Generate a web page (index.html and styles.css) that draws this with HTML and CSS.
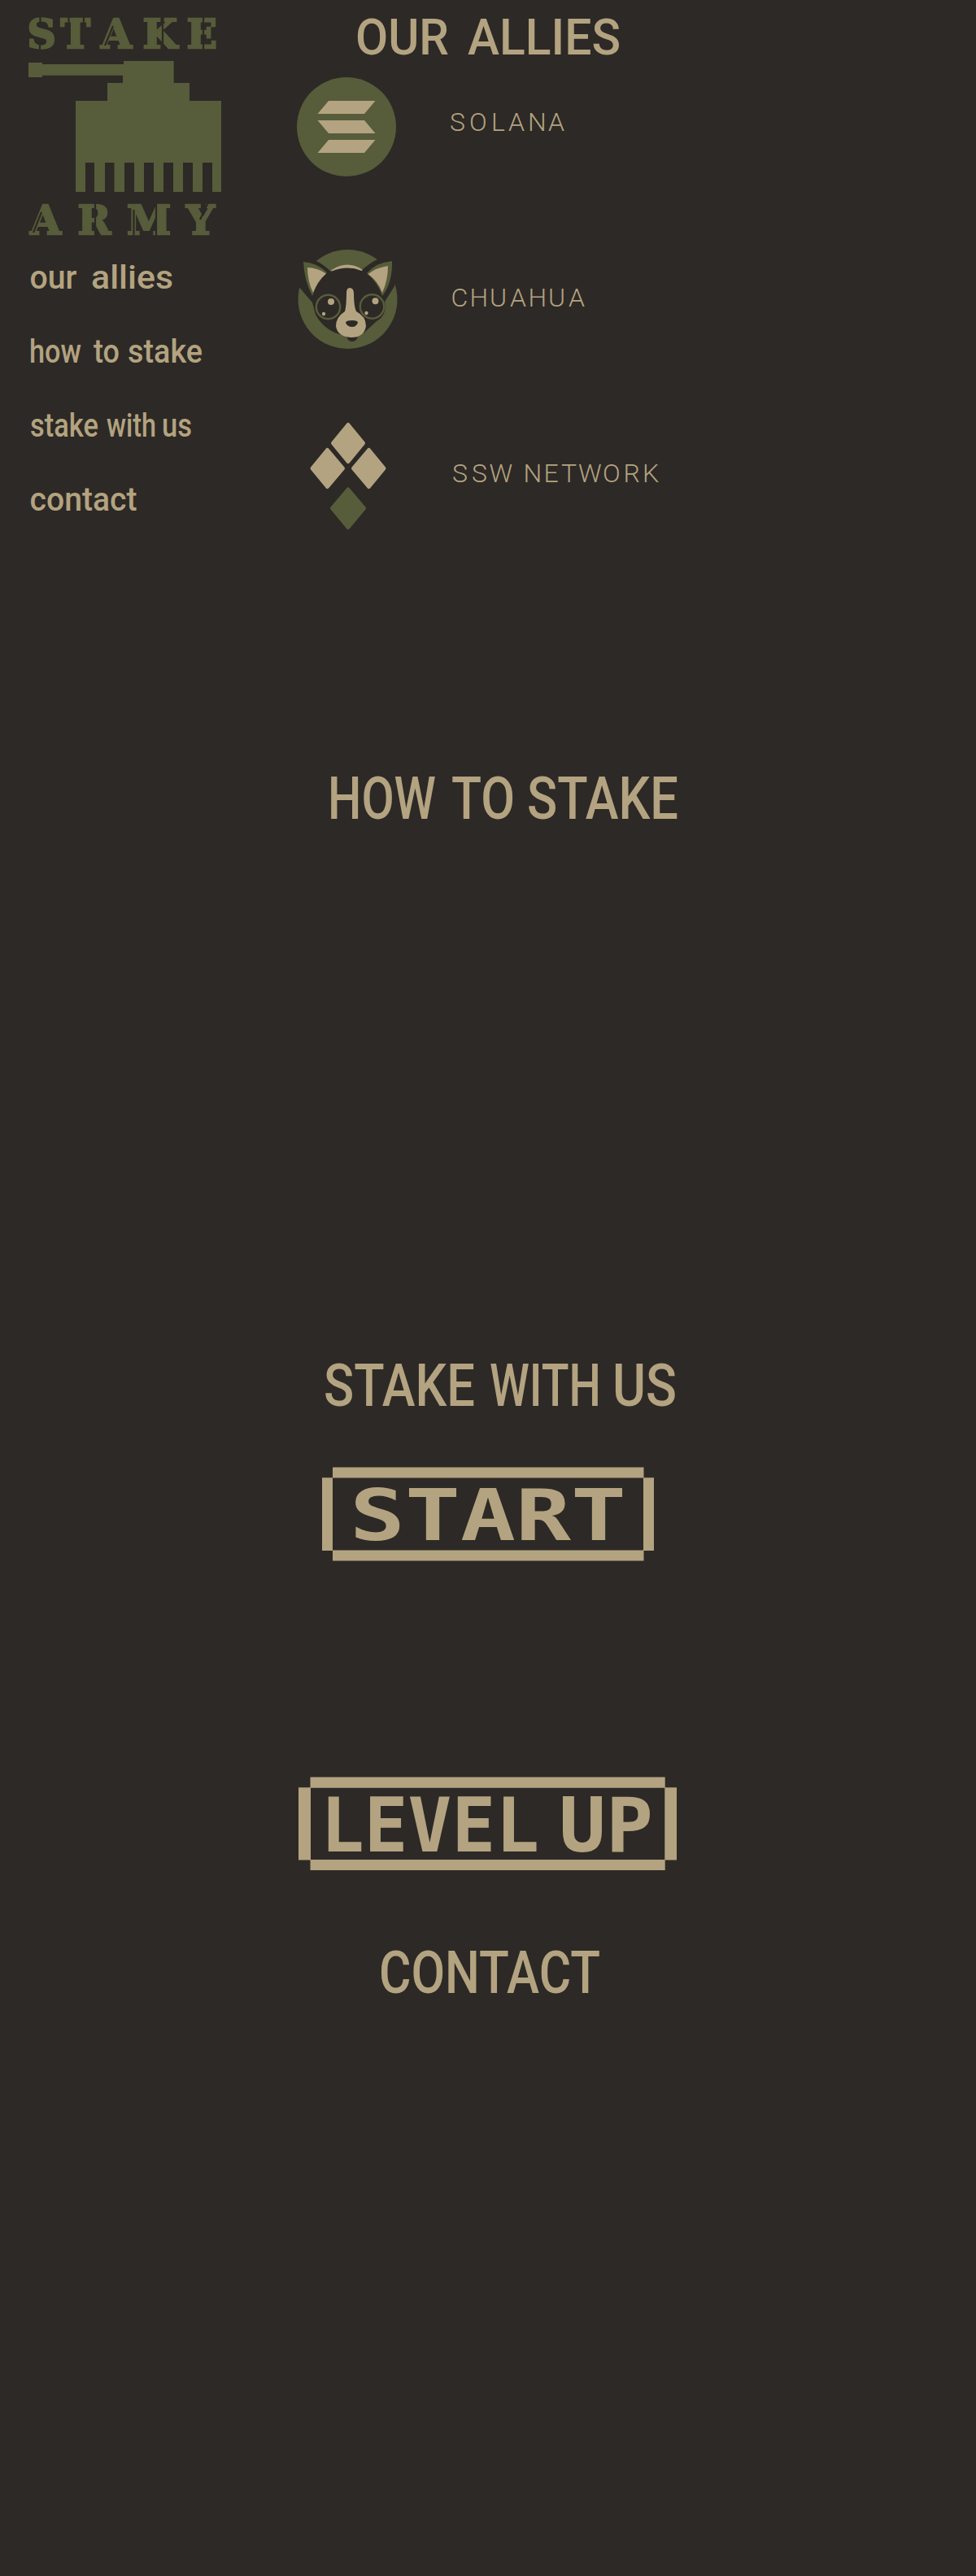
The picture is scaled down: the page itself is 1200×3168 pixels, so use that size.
FILE: index.html
```
<!DOCTYPE html>
<html lang="en">
<head>
<meta charset="utf-8">
<title>Stake Army</title>
<link rel="stylesheet" href="styles.css">
</head>
<body>
<div class="page">
  <aside class="sidebar">
    <svg class="logo" viewBox="0 0 300 300" role="img" aria-label="Stake Army">
      <text class="stencil" y="58.500" x="33.5 74.500 124 175.500 229.500">STAKE</text>
      <path class="olive" d="M35 77H52V79H152V75H213.7V102H233V124H272V236H261V200H249V236H237V200H225V236H213V200H201V236H189V200H177V236H165V200H153V236H140.5V200H129V236H116V200H105V236H93V124H132V102H151V92.7H52V95H35Z"/>
      <text class="stencil" y="287.500" x="37 95.500 156 229">ARMY</text>
      <path class="cut" d="M49.500 20V31M49 50V61M84.500 20V50M103 20V50M139 32L129 56M200 20V61M250 20V61M117 249V290M164.500 258V290M192 249V290M256 249L246 270M51 261L41 286"/>
    </svg>
    <nav class="menu">
      <a href="#allies"><svg viewBox="0 0 300 91"><text class="link" y="55" x="36.500" textLength="58" lengthAdjust="spacingAndGlyphs">our</text> <text class="link" y="55" x="112" textLength="101" lengthAdjust="spacingAndGlyphs">allies</text></svg></a>
      <a href="#how"><svg viewBox="0 0 300 91"><text class="link" y="55" x="36" textLength="64" lengthAdjust="spacingAndGlyphs">how</text> <text class="link" y="55" x="115" textLength="32" lengthAdjust="spacingAndGlyphs">to</text> <text class="link" y="55" x="157" textLength="92" lengthAdjust="spacingAndGlyphs">stake</text></svg></a>
      <a href="#stake"><svg viewBox="0 0 300 91"><text class="link" y="55" x="37" textLength="84" lengthAdjust="spacingAndGlyphs">stake</text> <text class="link" y="55" x="131" textLength="61" lengthAdjust="spacingAndGlyphs">with</text> <text class="link" y="55" x="199" textLength="37" lengthAdjust="spacingAndGlyphs">us</text></svg></a>
      <a href="#contact"><svg viewBox="0 0 300 91"><text class="link" y="55" x="36.500" textLength="132" lengthAdjust="spacingAndGlyphs">contact</text></svg></a>
    </nav>
  </aside>
  <main class="content">
    <section class="panel" id="allies">
      <h2 class="title first"><svg viewBox="300 0 900 80"><text class="head small" y="67" x="437" textLength="115" lengthAdjust="spacingAndGlyphs">OUR</text> <text class="head small" y="67" x="575" textLength="188" lengthAdjust="spacingAndGlyphs">ALLIES</text></svg></h2>
      <div class="ally"><svg viewBox="300 80 900 216">
        <circle class="olive" cx="426" cy="156" r="61"/>
        <path class="sand" d="M404 124H461.500L448 140H390.500ZM390.500 148H448L461.500 164H404ZM404 172H461.500L448 188H390.500Z"/>
        <text class="name" y="161" x="553 577 604 625 649 674">SOLANA</text>
      </svg></div>
      <div class="ally"><svg viewBox="300 296 900 216">
        <circle class="olive" cx="427.500" cy="368" r="61"/>
        <path class="dark" d="M364 316Q385 313 407 334Q426 322 445 332Q465 314 486 314Q489 340 485 352L473 371Q476 388 463 395L450 407Q445 413 436 412L421 412Q399 407 388 387L384 372L366 351Q363 332 364 316Z"/>
        <path class="sand" d="M407 332.500Q427 319 446 332L444.500 333Q427 326 408 333.500Z"/>
        <path class="olive" d="M373 322Q389 323 402 335Q389 348 384 364Q374 345 373 322ZM482 321Q462 323 451 336Q465 348 470 364Q483 347 482 321Z"/>
        <path class="sand" d="M378 329Q390 329 401 336.500Q390 346 385 360Q378 346 378 329ZM477 327Q463 329 452.500 337Q465 346 470 360Q477 345 477 327Z"/>
        <circle class="eye" cx="403.500" cy="377.500" r="14.700"/>
        <circle class="eye" cx="457.500" cy="377" r="14.700"/>
        <g class="sand"><circle cx="407" cy="371" r="4"/><circle cx="398" cy="386" r="2.200"/><circle cx="461.500" cy="370.300" r="4"/><circle cx="450.500" cy="385" r="2.200"/></g>
        <path class="dark" d="M426 413H440Q439 420 433 420Q427 420 426 413Z"/>
        <path class="sand" d="M426 360Q426 354 430 354Q434.500 354 435 360Q435 377 438 383Q450 389 450 401Q448 415 431.500 415Q415 414 413 401Q413 390 424 383Q426 376 426 360Z"/>
        <path class="dark" d="M425 397Q425 394 433 394Q440 394 440 397Q438 402 433 402Q427 402 425 397Z"/>
        <text class="name" y="377" x="554.500 577.500 602 627 649.500 674 699">CHUAHUA</text>
      </svg></div>
      <div class="ally"><svg viewBox="300 512 900 210">
        <path class="gem" d="M428 522.500L446.500 545L428 567.500L409.500 545ZM402.500 553.500L421.500 576L402.500 598.500L384 576ZM453.500 553.500L472 576L453.500 598.500L434.500 576Z"/>
        <path class="gem green" d="M428 602L447.500 625L428 648.500L408.500 625Z"/>
        <text class="name" y="593" x="556 580 601.500">SSW</text> <text class="name" y="593" x="643.500 668.500 690 711 741 766.500 790">NETWORK</text>
      </svg></div>
    </section>
    <section class="panel" id="how">
      <h2 class="title"><svg viewBox="300 222 900 80"><text class="head" y="285" x="403" textLength="133" lengthAdjust="spacingAndGlyphs">HOW</text> <text class="head" y="285" x="555" textLength="78" lengthAdjust="spacingAndGlyphs">TO</text> <text class="head" y="285" x="648" textLength="186" lengthAdjust="spacingAndGlyphs">STAKE</text></svg></h2>
    </section>
    <section class="panel" id="stake">
      <h2 class="title"><svg viewBox="300 222 900 80"><text class="head" y="285" x="398" textLength="186" lengthAdjust="spacingAndGlyphs">STAKE</text> <text class="head" y="285" x="602" textLength="137" lengthAdjust="spacingAndGlyphs">WITH</text> <text class="head" y="285" x="753" textLength="79" lengthAdjust="spacingAndGlyphs">US</text></svg></h2>
      <a class="button start" href="#stake"><svg viewBox="396 1804 408 116">
        <path class="sand" d="M409 1804.500H791.500V1817.300H804V1907H791.500V1919.500H409V1907H396V1817.300H409ZM409 1817.500V1906.500H791V1817.500Z" fill-rule="evenodd"/>
        <text class="press" y="1894" x="430" textLength="340" lengthAdjust="spacingAndGlyphs">START</text>
      </svg></a>
      <a class="button level" href="#stake"><svg viewBox="367 2185 466 116">
        <path class="sand" d="M381.500 2185.500H817.700V2198.300H832V2287.500H817.700V2300H381.500V2287.500H367V2198.300H381.500ZM382 2198.800V2287H817.300V2198.800Z" fill-rule="evenodd"/>
        <text class="press rounded" y="2277" x="394" textLength="269" lengthAdjust="spacingAndGlyphs">LEVEL</text> <text class="press rounded" y="2277" x="687" textLength="116" lengthAdjust="spacingAndGlyphs">UP</text>
      </svg></a>
    </section>
    <section class="panel" id="contact">
      <h2 class="title"><svg viewBox="300 222 900 80"><text class="head" y="285" x="466" textLength="272" lengthAdjust="spacingAndGlyphs">CONTACT</text></svg></h2>
    </section>
  </main>
</div>
</body>
</html>
```
FILE: styles.css
```
* { box-sizing: border-box; }
body { margin: 0; background: #2d2926; color: #b3a380; font-family: Roboto, "Liberation Sans", sans-serif; }
svg { display: block; width: 100%; height: auto; overflow: visible; }
a { display: block; color: inherit; text-decoration: none; }
.page { display: grid; grid-template-columns: 300px 900px; height: 3168px; overflow: hidden; }
.menu { display: flex; flex-direction: column; }
.content { display: flex; flex-direction: column; }
.panel { display: flex; flex-direction: column; height: 722px; flex: none; }
#how, #stake, #contact { padding-top: 222px; }
.title { margin: 0; font-weight: inherit; }
.olive { fill: #575c3a; }
.sand, text { fill: #b3a380; }
.dark { fill: #2d2926; }
.stencil { fill: #575c3a; stroke: #575c3a; stroke-width: 2.4; font: bold 49px "DejaVu Serif", serif; }
.cut { stroke: #2d2926; stroke-width: 2.2; fill: none; }
.link { font-size: 40px; font-weight: 500; }
.head { font-size: 71.5px; font-weight: 500; }
.head.small { font-size: 61.5px; }
.name { font-size: 32px; font-weight: 300; }
.eye { fill: #2d2926; stroke: #575c3a; stroke-width: 2.4; }
.gem { fill: #b3a380; stroke: #b3a380; stroke-width: 5; stroke-linejoin: round; }
.gem.green { fill: #575c3a; stroke: #575c3a; }
.press { font: bold 88px "DejaVu Sans Mono", monospace; }
.press.rounded { font-size: 92px; }
.button { flex: none; }
.start { width: 408px; margin: 58px 0 0 96px; }
.level { width: 466px; margin: 265px 0 0 67px; }
```
